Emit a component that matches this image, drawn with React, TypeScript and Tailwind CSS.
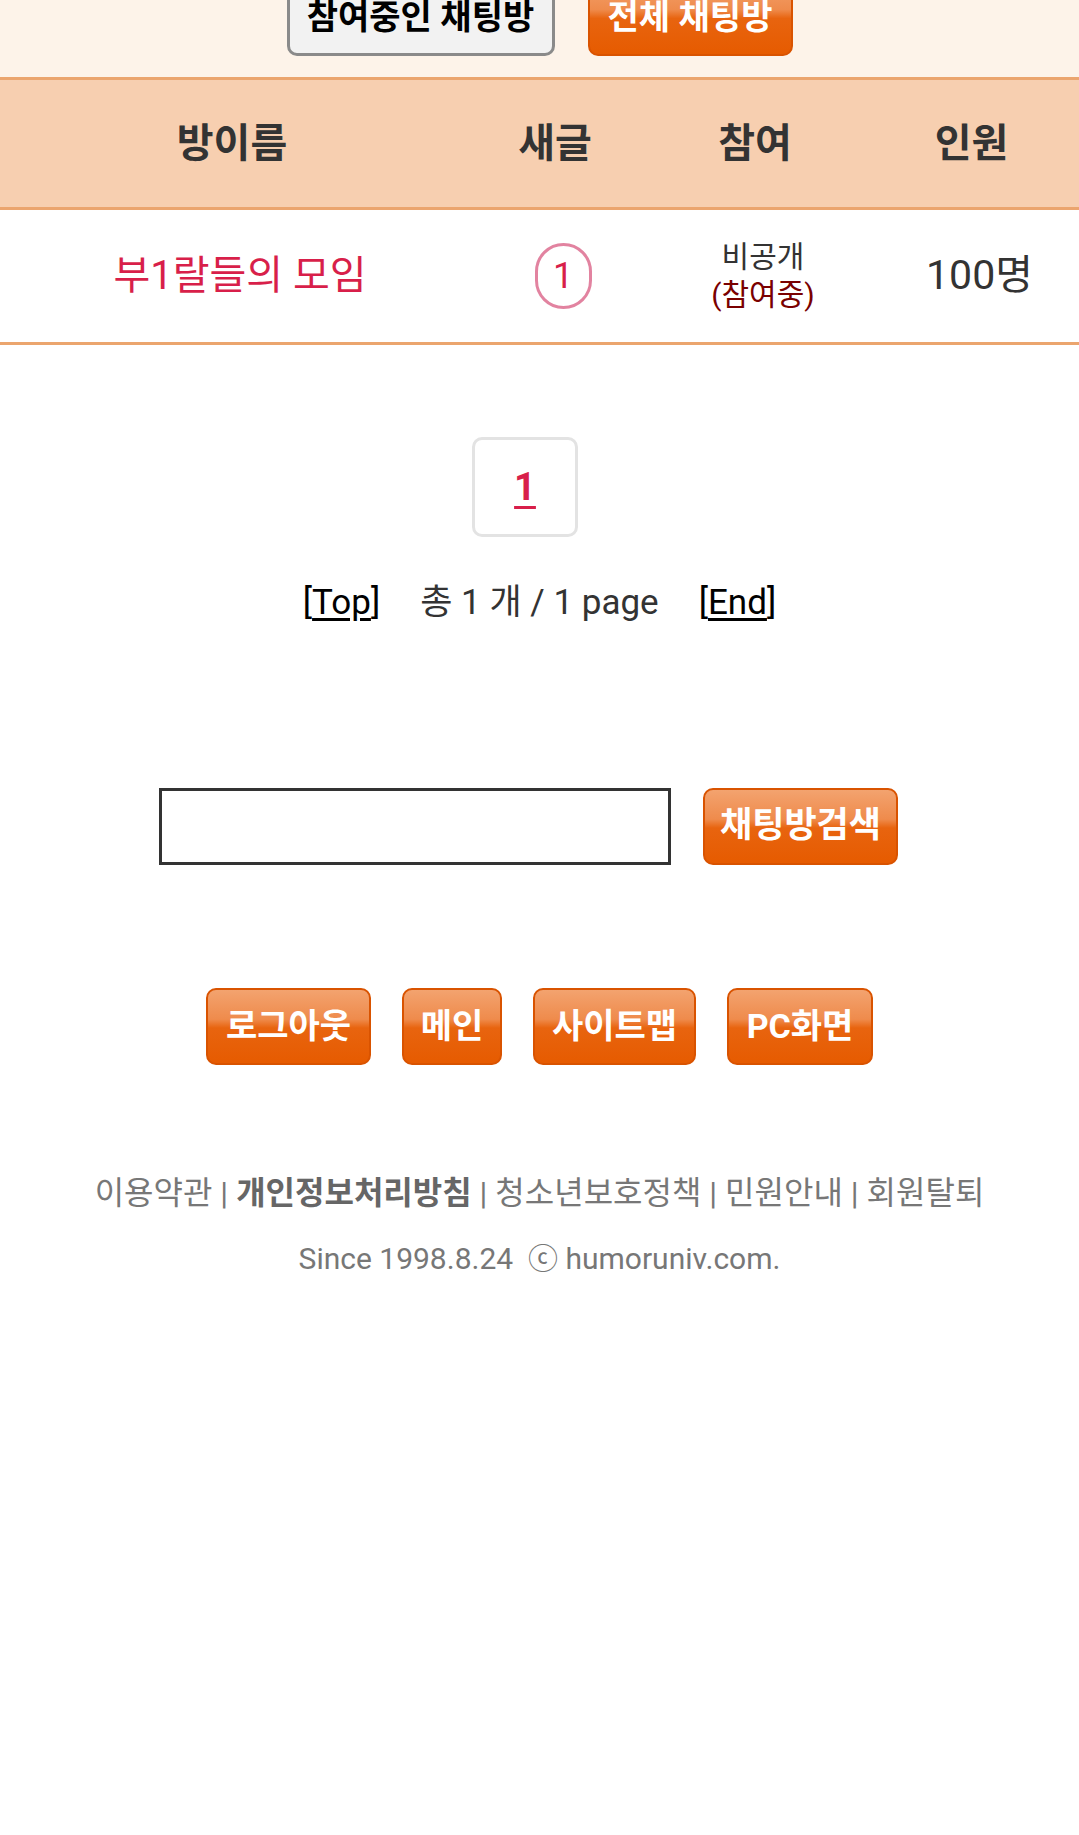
import React from "react";

const glossy =
  "bg-[linear-gradient(to_bottom,#f3a36f_0%,#ef8b4c_40%,#e8640f_52%,#e65b00_100%)] border-2 border-[#d95300] text-white font-bold rounded-[10px] flex items-center justify-center";

function OrangeButton({ label, className }: { label: string; className: string }) {
  return <button className={`${glossy} ${className}`}>{label}</button>;
}

function TopTabs() {
  return (
    <div className="h-[77px] bg-[#fdf3e9] overflow-hidden flex items-end justify-center gap-[33px] pb-[21px]">
      <button className="h-[78px] w-[268px] shrink-0 bg-[#f2f2f2] border-[3px] border-[#8a8a8a] rounded-[10px] text-[34px] font-bold text-black flex items-center justify-center">
        참여중인 채팅방
      </button>
      <OrangeButton label="전체 채팅방" className="h-[78px] w-[205px] shrink-0 text-[34px]" />
    </div>
  );
}

function RoomTable() {
  return (
    <div>
      <div className="h-[133px] bg-[#f7cfb0] border-y-[3px] border-[#eba56e] grid grid-cols-[464px_182px_218px_215px] items-center text-[40px] font-bold text-[#333]">
        <div className="text-center">방이름</div>
        <div className="text-center">새글</div>
        <div className="text-center">참여</div>
        <div className="text-center">인원</div>
      </div>
      <div className="h-[135px] border-b-[3px] border-[#eba56e] grid grid-cols-[464px_182px_218px_215px] items-center pl-[8px]">
        <div className="text-center text-[40px] text-[#d81f4a]">부1랄들의 모임</div>
        <div className="flex justify-center">
          <span className="w-[57px] h-[66px] rounded-full border-[3px] border-[#e283a0] text-[36px] text-[#d81f4a] flex items-center justify-center leading-none">
            1
          </span>
        </div>
        <div className="text-center text-[30px] leading-[38px]">
          <div className="text-[#333]">비공개</div>
          <div className="text-[#7a0000]">(참여중)</div>
        </div>
        <div className="text-center text-[41px] text-[#333]">100명</div>
      </div>
    </div>
  );
}

function Pager() {
  return (
    <div className="flex flex-col items-center">
      <div className="mt-[92px] mr-[29px] w-[106px] h-[100px] border-[3px] border-[#e3e3e3] rounded-[10px] flex items-center justify-center">
        <span className="text-[38px] font-bold text-[#d81f4a] underline underline-offset-[6px]">1</span>
      </div>
      <div className="mt-[46px] h-[40px] flex items-center gap-[40px] text-[35px] leading-[40px]">
        <span className="text-black">
          [<span className="underline underline-offset-[4px]">Top</span>]
        </span>
        <span className="text-[#333]">총 1 개 / 1 page</span>
        <span className="text-black">
          [<span className="underline underline-offset-[4px]">End</span>]
        </span>
      </div>
    </div>
  );
}

function SearchBar() {
  return (
    <div className="mt-[165px] pr-[22px] flex justify-center items-center gap-[32px]">
      <input
        type="text"
        className="w-[512px] h-[77px] border-[3px] border-[#333] bg-white outline-none"
      />
      <OrangeButton label="채팅방검색" className="w-[195px] h-[77px] text-[35px]" />
    </div>
  );
}

function FooterNav() {
  return (
    <div className="mt-[123px] flex justify-center gap-[31px]">
      <OrangeButton label="로그아웃" className="w-[165px] h-[77px] text-[34px]" />
      <OrangeButton label="메인" className="w-[100px] h-[77px] text-[34px]" />
      <OrangeButton label="사이트맵" className="w-[163px] h-[77px] text-[34px]" />
      <OrangeButton label="PC화면" className="w-[146px] h-[77px] text-[34px]" />
    </div>
  );
}

function Footer() {
  return (
    <div className="text-center text-[#777]">
      <div className="mt-[108px] h-[40px] leading-[40px] text-[32px]">
        이용약관 | <b className="text-[#666]">개인정보처리방침</b> | 청소년보호정책 | 민원안내 | 회원탈퇴
      </div>
      <div className="mt-[26px] h-[40px] leading-[40px] text-[30px]">
        Since 1998.8.24&nbsp; ⓒ humoruniv.com.
      </div>
    </div>
  );
}

export default function App() {
  return (
    <div className="min-h-[1835px] bg-white font-[Roboto,'Noto_Sans_CJK_KR',sans-serif]">
      <TopTabs />
      <RoomTable />
      <Pager />
      <SearchBar />
      <FooterNav />
      <Footer />
    </div>
  );
}
